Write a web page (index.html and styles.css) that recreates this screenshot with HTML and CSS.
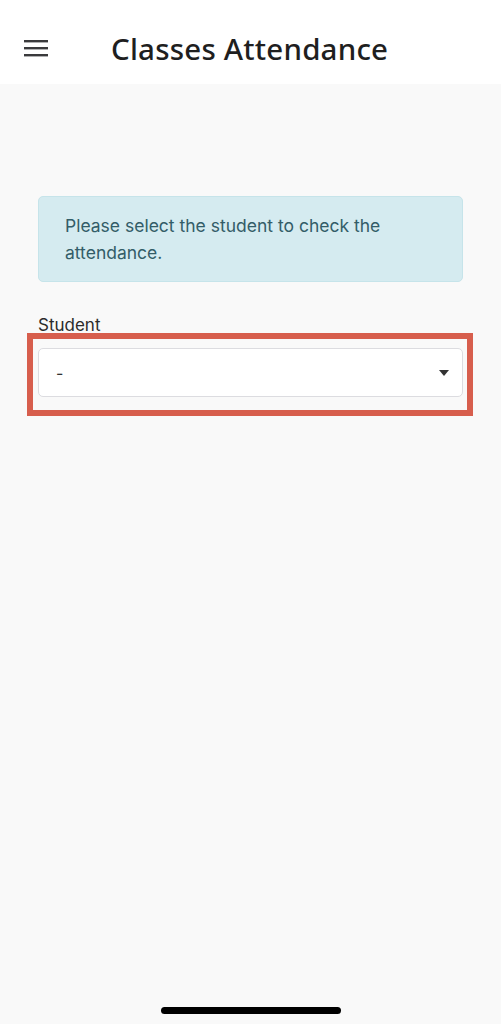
FILE: index.html
```html
<!DOCTYPE html>
<html lang="en">
<head>
<meta charset="utf-8">
<title>Classes Attendance</title>
<link rel="stylesheet" href="styles.css">
</head>
<body>
<div class="screen">
  <header class="topbar">
    <button class="menu" aria-label="Menu">
      <svg width="24" height="18" viewBox="0 0 24 18"><rect x="0" y="1" width="24" height="2.4" fill="#3a3a3c"/><rect x="0" y="8" width="24" height="2.4" fill="#3a3a3c"/><rect x="0" y="15" width="24" height="2.4" fill="#3a3a3c"/></svg>
    </button>
    <h1 class="title">Classes Attendance</h1>
  </header>
  <main class="content">
    <div class="alert">Please select the student to check the attendance.</div>
    <label class="label">Student</label>
    <div class="field">
      <div class="select">
        <span class="value">-</span>
        <svg class="caret" width="10" height="6" viewBox="0 0 10 6"><path d="M0 0 H10 L5 6 Z" fill="#333"/></svg>
      </div>
    </div>
  </main>
  <div class="home"></div>
</div>
</body>
</html>
```
FILE: styles.css
```css
* { box-sizing: border-box; }
html, body { margin: 0; padding: 0; }
body {
  width: 501px;
  height: 1024px;
  background: #f9f9f9;
  font-family: Inter, "Liberation Sans", Arial, sans-serif;
  overflow: hidden;
}
.screen {
  height: 1024px;
  display: flex;
  flex-direction: column;
}
.topbar {
  height: 84px;
  background: #ffffff;
  display: flex;
  align-items: center;
  padding-left: 24px;
}
.menu {
  border: 0;
  background: none;
  padding: 0;
  width: 24px;
  height: 18px;
  display: flex;
  margin-top: 12px;
}
.title {
  margin: 12px 0 0 63px;
  font-family: "Noto Sans", sans-serif;
  font-weight: 500;
  font-size: 29.5px;
  color: #1f1f1f;
  letter-spacing: 0.2px;
}
.content {
  flex: 1;
  padding: 112px 38px 0 38px;
  display: flex;
  flex-direction: column;
}
.alert {
  height: 86px;
  background: #d5ebf0;
  border: 1px solid #c6e4ea;
  border-radius: 5px;
  padding: 15px 40px 0 26px;
  font-size: 17.5px;
  line-height: 27px;
  color: #335d68;
}
.label {
  margin-top: 33px;
  font-size: 17px;
  line-height: 20px;
  color: #2b2b2b;
  display: block;
}
.field {
  position: relative;
  margin-top: 13px;
}
.field::after {
  content: "";
  position: absolute;
  left: -11px;
  right: -10px;
  top: -15px;
  bottom: -19px;
  border: 6px solid #d75e4d;
  pointer-events: none;
}
.select {
  height: 49px;
  background: #ffffff;
  border: 1px solid #dcdce0;
  border-radius: 5px;
  display: flex;
  align-items: center;
  justify-content: space-between;
  padding: 0 13px 0 17px;
}
.value {
  font-size: 16px;
  color: #333;
}
.home {
  width: 180px;
  height: 7px;
  border-radius: 4px;
  background: #000;
  margin: 0 auto 10px auto;
}
```
